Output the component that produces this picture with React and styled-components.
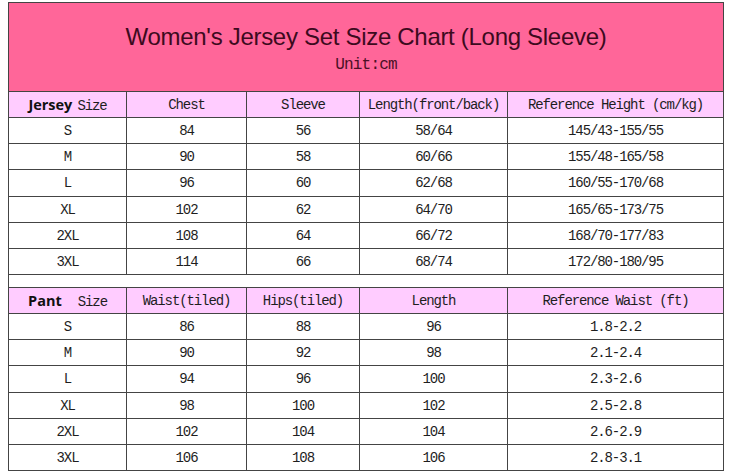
import React from 'react';
import styled, { createGlobalStyle } from 'styled-components';

const GlobalStyle = createGlobalStyle`
  body {
    margin: 0;
    background: #ffffff;
  }
`;

const Page = styled.div`
  padding: 2px 0 0 8px;
  width: 729px;
  height: 473px;
  box-sizing: border-box;
  overflow: hidden;
`;

const Table = styled.table`
  border-collapse: collapse;
  table-layout: fixed;
  width: 715px;
  font-family: "Liberation Mono", monospace;
  font-size: 14px;
  letter-spacing: -1.1px;
  color: #1e1e1e;
`;

const Banner = styled.td`
  background: #ff6699;
  border: 1px solid #444;
  height: 88px;
  padding: 0;
  text-align: center;
  vertical-align: middle;
`;

const Title = styled.div`
  font-family: "Liberation Sans", Arial, sans-serif;
  font-size: 24px;
  letter-spacing: -0.3px;
  color: #3d0a1e;
  margin-top: 2px;
`;

const Unit = styled.div`
  font-family: "Liberation Mono", monospace;
  font-size: 16px;
  letter-spacing: -0.8px;
  color: #4a1025;
  margin-top: 5px;
`;

const Row = styled.tr`
  height: ${p => p.h || 26}px;
`;

const Cell = styled.td`
  border: 1px solid #444;
  text-align: center;
  vertical-align: middle;
  padding: 0;
  background: ${p => (p.head ? '#ffccff' : '#ffffff')};
  white-space: nowrap;
`;

const Gap = styled.td`
  border: 1px solid #444;
  padding: 0;
`;

const Label = styled.span`
  font-family: "Open Sans", "Liberation Sans", sans-serif;
  font-weight: 700;
  font-size: 14.5px;
  letter-spacing: 0;
  color: #111;
  margin-right: ${p => p.space}px;
`;

const jersey = [
  ['S', '84', '56', '58/64', '145/43-155/55'],
  ['M', '90', '58', '60/66', '155/48-165/58'],
  ['L', '96', '60', '62/68', '160/55-170/68'],
  ['XL', '102', '62', '64/70', '165/65-173/75'],
  ['2XL', '108', '64', '66/72', '168/70-177/83'],
  ['3XL', '114', '66', '68/74', '172/80-180/95'],
];

const pant = [
  ['S', '86', '88', '96', '1.8-2.2'],
  ['M', '90', '92', '98', '2.1-2.4'],
  ['L', '94', '96', '100', '2.3-2.6'],
  ['XL', '98', '100', '102', '2.5-2.8'],
  ['2XL', '102', '104', '104', '2.6-2.9'],
  ['3XL', '106', '108', '106', '2.8-3.1'],
];

const jerseyHeights = [26, 26, 27, 26, 26, 26];
const pantHeights = [26, 26, 27, 26, 26, 26];

export default function App() {
  return (
    <Page>
      <GlobalStyle />
      <Table>
        <colgroup>
          <col style={{ width: 118 }} />
          <col style={{ width: 120 }} />
          <col style={{ width: 113 }} />
          <col style={{ width: 148 }} />
          <col style={{ width: 216 }} />
        </colgroup>
        <tbody>
          <tr>
            <Banner colSpan={5}>
              <Title>Women's Jersey Set Size Chart (Long Sleeve)</Title>
              <Unit>Unit:cm</Unit>
            </Banner>
          </tr>
          <Row>
            <Cell head><Label space={5}>Jersey</Label>Size</Cell>
            <Cell head>Chest</Cell>
            <Cell head>Sleeve</Cell>
            <Cell head>Length(front/back)</Cell>
            <Cell head>Reference Height (cm/kg)</Cell>
          </Row>
          {jersey.map((r, i) => (
            <Row key={r[0]} h={jerseyHeights[i]}>
              {r.map((v, j) => <Cell key={j}>{v}</Cell>)}
            </Row>
          ))}
          <Row h={13}>
            <Gap colSpan={5} />
          </Row>
          <Row>
            <Cell head><Label space={16}>Pant</Label>Size</Cell>
            <Cell head>Waist(tiled)</Cell>
            <Cell head>Hips(tiled)</Cell>
            <Cell head>Length</Cell>
            <Cell head>Reference Waist (ft)</Cell>
          </Row>
          {pant.map((r, i) => (
            <Row key={r[0]} h={pantHeights[i]}>
              {r.map((v, j) => <Cell key={j}>{v}</Cell>)}
            </Row>
          ))}
        </tbody>
      </Table>
    </Page>
  );
}
